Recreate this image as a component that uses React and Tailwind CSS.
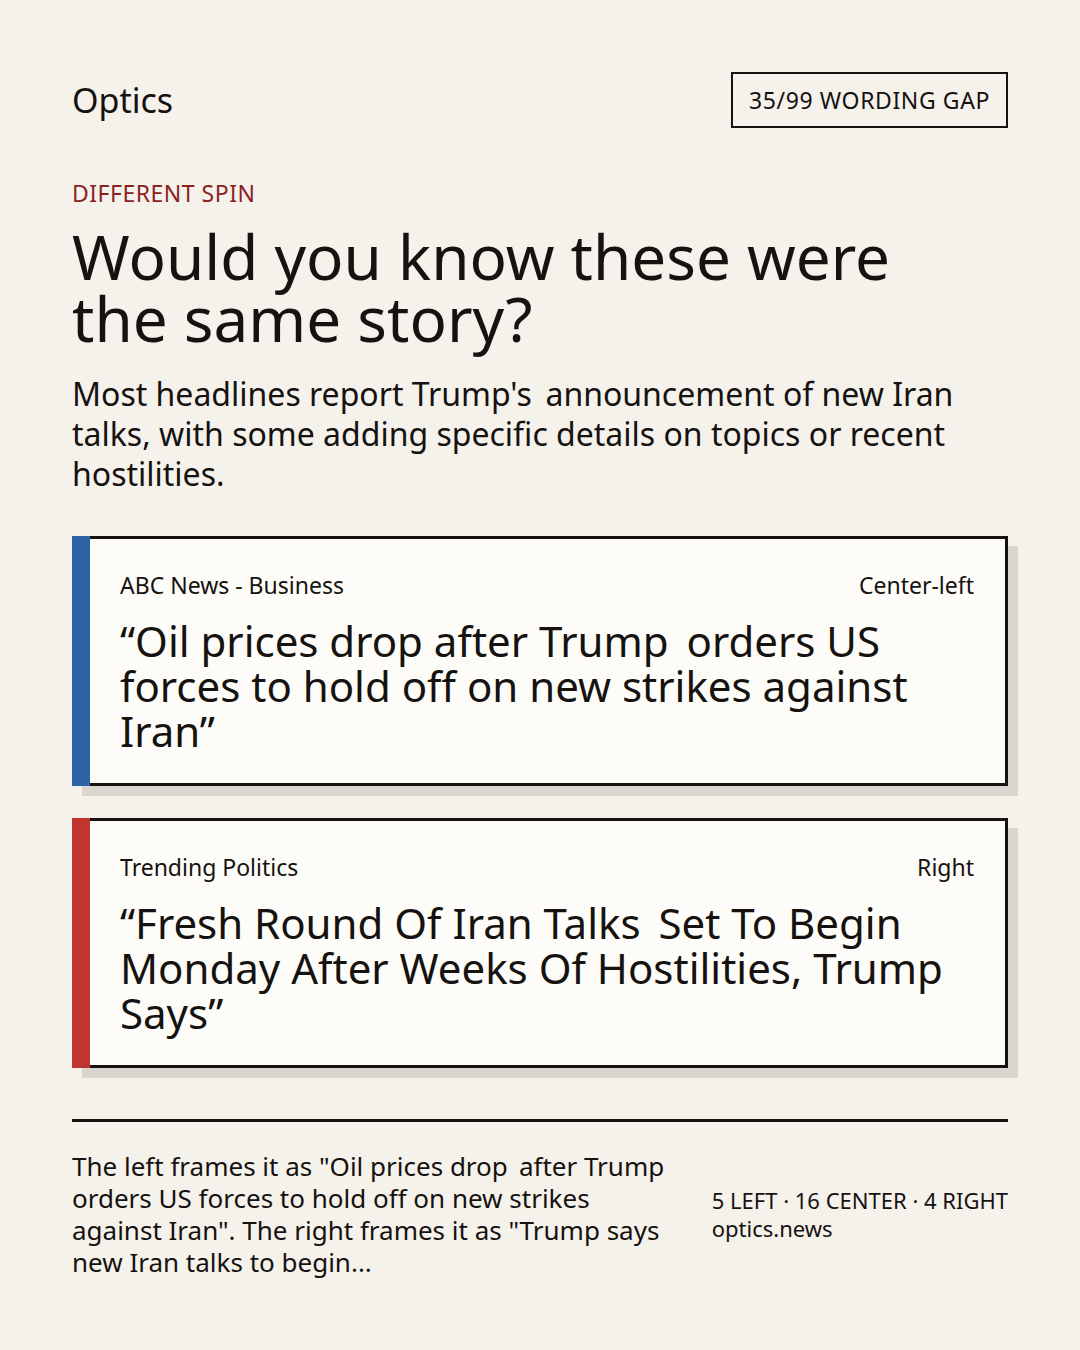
export default function App() {
  const font = { fontFamily: '"Noto Sans", "Open Sans", sans-serif' };
  const Card = ({ bar, source, lean, children }) => (
    <div className="relative">
      <div className="absolute left-[10px] top-[10px] w-full h-full bg-[#d9d6cf]" />
      <div className="relative flex">
        <div className={`w-[18px] shrink-0 ${bar}`} />
        <div className="flex-1 bg-[#fdfcf8] border-y-[3px] border-r-[3px] border-[#15120f] pl-[30px] pr-[31px] pt-[31px] pb-[30px]">
          <div className="flex justify-between text-[23px] leading-[31px] text-[#15120f]">
            <span>{source}</span>
            <span>{lean}</span>
          </div>
          <div className="mt-[17px] text-[42px] leading-[45px] text-[#15120f]">{children}</div>
        </div>
      </div>
    </div>
  );
  return (
    <div style={font} className="w-[1080px] h-[1350px] bg-[#f5f1eb] text-[#15120f] px-[72px] pt-[72px]">
      <div className="flex justify-between items-center h-[56px]">
        <div className="text-[34px] leading-[44px]">Optics</div>
        <div className="h-[56px] border-2 border-[#15120f] px-[16px] flex items-center text-[23px] tracking-[0.6px]">35/99 WORDING GAP</div>
      </div>
      <div className="mt-[50px] text-[23px] leading-[31px] tracking-[0.5px] text-[#8b2222]">DIFFERENT SPIN</div>
      <h1 className="mt-[17px] max-w-[860px] text-[62px] leading-[61.6px]">Would you know these were the same story?</h1>
      <p className="mt-[25px] text-[32px] leading-[40px]">{"Most headlines report Trump's\u2009 announcement of new Iran talks, with some adding specific details on topics or recent hostilities."}</p>
      <div className="mt-[42px] flex flex-col gap-[32px]">
        <Card bar="bg-[#2d64a8]" source="ABC News - Business" lean="Center-left">{"“Oil prices drop after Trump\u2009 orders US forces to hold off on new strikes against Iran”"}</Card>
        <Card bar="bg-[#c0352f]" source="Trending Politics" lean="Right">{"“Fresh Round Of Iran Talks\u2009 Set To Begin Monday After Weeks Of Hostilities, Trump Says”"}</Card>
      </div>
      <div className="mt-[51px] h-[3px] bg-[#15120f]" />
      <div className="mt-[28px] flex justify-between items-center">
        <p className="w-[600px] text-[26px] leading-[32px]">{"The left frames it as \"Oil prices drop\u2009 after Trump orders US forces to hold off on new strikes against Iran\". The right frames it as \"Trump says new Iran talks to begin..."}</p>
        <div className="text-[22px] leading-[28px]">
          <div>5 LEFT · 16 CENTER · 4 RIGHT</div>
          <div>optics.news</div>
        </div>
      </div>
    </div>
  );
}
